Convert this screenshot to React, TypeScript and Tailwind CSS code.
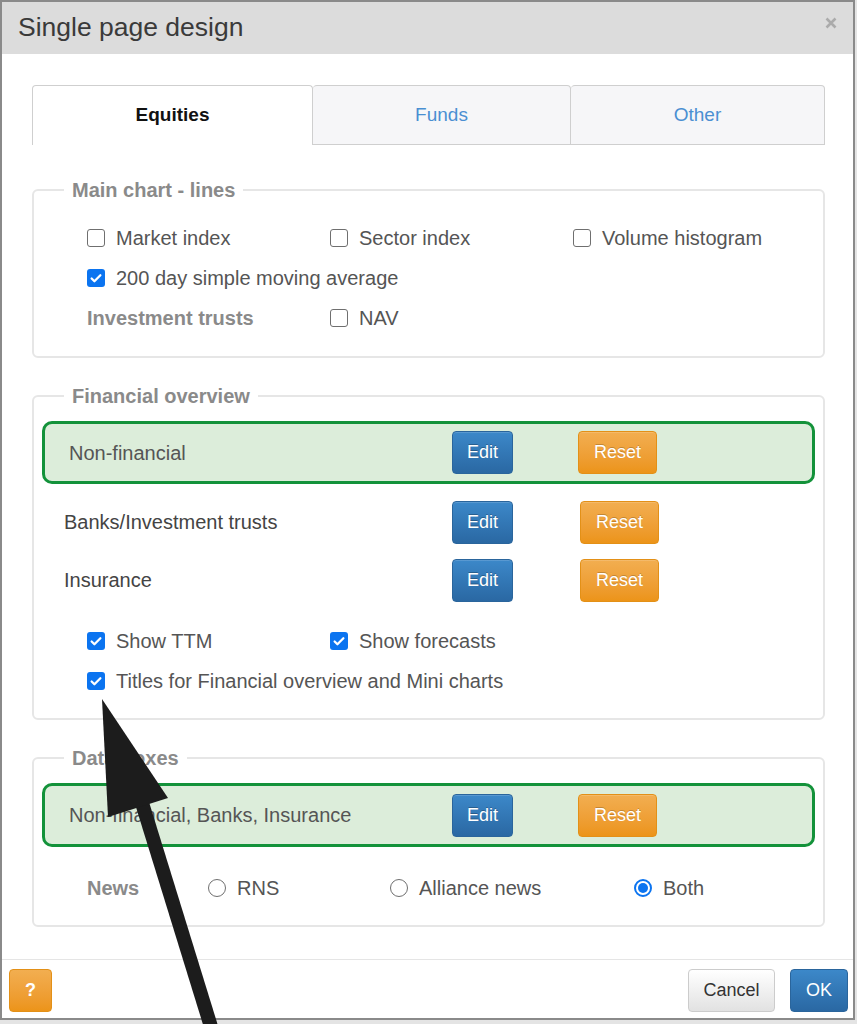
import React from 'react';

const Check = ({ checked, label }: { checked?: boolean; label: string }) => {
    return (
        <div className="flex items-center gap-[11px]">
            {checked ? (
                <span className="w-[18px] h-[18px] rounded-[3px] bg-[#0b74f0] flex items-center justify-center">
                    <svg viewBox="0 0 16 16" className="w-[14px] h-[14px]" fill="none">
                        <path d="M3 8.5l3.2 3.2L13 4.8" stroke="white" strokeWidth="2.6" strokeLinecap="round" strokeLinejoin="round" />
                    </svg>
                </span>
            ) : (
                <span className="w-[18px] h-[18px] rounded-[3px] border-[1.5px] border-[#6f6f6f] bg-white" />
            )}
            <span className="text-[20px] text-[#555]">{label}</span>
        </div>
    );
};

const Radio = ({ checked, label }: { checked?: boolean; label: string }) => {
    return (
        <div className="flex items-center gap-[11px]">
            {checked ? (
                <span className="w-[18px] h-[18px] rounded-full border-2 border-[#0b74f0] flex items-center justify-center bg-white">
                    <span className="w-[10px] h-[10px] rounded-full bg-[#0b74f0]" />
                </span>
            ) : (
                <span className="w-[18px] h-[18px] rounded-full border-[1.5px] border-[#6f6f6f] bg-white" />
            )}
            <span className="text-[20px] text-[#555]">{label}</span>
        </div>
    );
};

const EditBtn = () => (
    <button
        type="button"
        className="w-[61px] h-[43px] rounded-[4px] border border-[#2a659c] bg-linear-to-b from-[#3c88c9] to-[#2a68a3] text-white text-[18px] [text-shadow:0_-1px_0_rgba(0,0,0,0.25)] shadow-[inset_0_1px_0_rgba(255,255,255,0.15)]"
    >
        Edit
    </button>
);

const ResetBtn = () => (
    <button
        type="button"
        className="w-[79px] h-[43px] rounded-[4px] border border-[#e39017] bg-linear-to-b from-[#f2ae50] to-[#ec9418] text-white text-[18px] [text-shadow:0_-1px_0_rgba(0,0,0,0.2)] shadow-[inset_0_1px_0_rgba(255,255,255,0.15)]"
    >
        Reset
    </button>
);

const Section = ({ title, className, children }: { title: string; className?: string; children: React.ReactNode }) => (
    <fieldset className={`border-2 border-[#e6e6e6] rounded-[6px] p-0 ${className ?? ''}`}>
        <legend className="ml-[30px] px-[8px] text-[20px] leading-[24px] font-bold text-[#8a8a8a]">{title}</legend>
        {children}
    </fieldset>
);

const App = () => {
    return (
        <div className="relative w-[857px] h-[1024px] overflow-hidden bg-[#e4e4e4] font-['Liberation_Sans',Arial,sans-serif]">
            <div className="w-[855px] h-[1020px] border-2 border-[#8a8a8a] bg-white flex flex-col">
                {/* header */}
                <div className="h-[52px] bg-[#dcdcdc] flex items-center justify-between pl-[16px] pr-[16px] shrink-0">
                    <h1 className="text-[26.5px] text-[#3a3a3a]">Single page design</h1>
                    <svg viewBox="0 0 12 12" className="w-[12px] h-[12px] mt-[-10px]">
                        <path d="M1.5 1.5l9 9M10.5 1.5l-9 9" stroke="#ababab" strokeWidth="2.6" />
                    </svg>
                </div>

                <div className="pl-[30px] pr-[28px] pt-[31px]">
                    {/* tabs */}
                    <div className="flex h-[60px]">
                        <div className="w-[281px] border border-b-0 border-[#cfcfcf] rounded-t-[4px] bg-white flex items-center justify-center text-[19px] font-bold text-[#111]">
                            Equities
                        </div>
                        <div className="w-[258px] border border-l-0 border-[#cfcfcf] rounded-t-[4px] bg-[#f6f6f8] flex items-center justify-center text-[19px] text-[#4a8fd2]">
                            Funds
                        </div>
                        <div className="w-[254px] border border-l-0 border-[#cfcfcf] rounded-t-[4px] bg-[#f6f6f8] flex items-center justify-center text-[19px] text-[#4a8fd2]">
                            Other
                        </div>
                    </div>

                    {/* main chart */}
                    <Section title="Main chart - lines" className="mt-[33px]">
                        <div className="pt-[16px] pb-[18px] pl-[53px]">
                            <div className="grid grid-cols-[243px_243px_1fr] h-[40px] items-center">
                                <Check label="Market index" />
                                <Check label="Sector index" />
                                <Check label="Volume histogram" />
                            </div>
                            <div className="flex h-[40px] items-center">
                                <Check checked label="200 day simple moving average" />
                            </div>
                            <div className="grid grid-cols-[243px_1fr] h-[40px] items-center">
                                <span className="text-[20px] font-bold text-[#8a8a8a]">Investment trusts</span>
                                <Check label="NAV" />
                            </div>
                        </div>
                    </Section>

                    {/* financial overview */}
                    <Section title="Financial overview" className="mt-[26px]">
                        <div className="pt-[13px] pb-[17px] pl-[8px] pr-[8px]">
                            <div className="h-[63px] border-[3px] border-[#13923a] rounded-[10px] bg-[#dcedda] flex items-center pl-[24px]">
                                <span className="w-[383px] text-[20px] text-[#555]">Non-financial</span>
                                <EditBtn />
                                <span className="w-[65px]" />
                                <ResetBtn />
                            </div>
                            <div className="mt-[9px] h-[58px] flex items-center pl-[22px]">
                                <span className="w-[388px] text-[20px] text-[#444]">Banks/Investment trusts</span>
                                <EditBtn />
                                <span className="w-[67px]" />
                                <ResetBtn />
                            </div>
                            <div className="h-[58px] flex items-center pl-[22px]">
                                <span className="w-[388px] text-[20px] text-[#444]">Insurance</span>
                                <EditBtn />
                                <span className="w-[67px]" />
                                <ResetBtn />
                            </div>
                            <div className="mt-[12px] pl-[45px]">
                                <div className="grid grid-cols-[243px_1fr] h-[40px] items-center">
                                    <Check checked label="Show TTM" />
                                    <Check checked label="Show forecasts" />
                                </div>
                                <div className="flex h-[40px] items-center">
                                    <Check checked label="Titles for Financial overview and Mini charts" />
                                </div>
                            </div>
                        </div>
                    </Section>

                    {/* data boxes */}
                    <Section title="Data boxes" className="mt-[26px]">
                        <div className="pt-[13px] pb-[17px] pl-[8px] pr-[8px]">
                            <div className="h-[64px] border-[3px] border-[#13923a] rounded-[10px] bg-[#dcedda] flex items-center pl-[24px]">
                                <span className="w-[383px] text-[20px] text-[#555]">Non-financial, Banks, Insurance</span>
                                <EditBtn />
                                <span className="w-[65px]" />
                                <ResetBtn />
                            </div>
                            <div className="mt-[21px] h-[40px] flex items-center pl-[45px]">
                                <span className="w-[121px] text-[20px] font-bold text-[#8a8a8a]">News</span>
                                <div className="w-[182px]">
                                    <Radio label="RNS" />
                                </div>
                                <div className="w-[244px]">
                                    <Radio label="Alliance news" />
                                </div>
                                <Radio checked label="Both" />
                            </div>
                        </div>
                    </Section>
                </div>

                {/* footer */}
                <div className="mt-auto h-[59px] border-t border-[#e5e5e5] flex items-start justify-between pt-[9px] pl-[7px] pr-[5px]">
                    <button
                        type="button"
                        className="w-[43px] h-[43px] rounded-[4px] border border-[#e39017] bg-linear-to-b from-[#f2ae50] to-[#ec9418] text-white text-[18px] font-bold"
                    >
                        ?
                    </button>
                    <div className="flex gap-[15px]">
                        <button
                            type="button"
                            className="w-[87px] h-[43px] rounded-[4px] border border-[#cccccc] bg-linear-to-b from-[#ffffff] to-[#e2e2e2] text-[#333] text-[18px]"
                        >
                            Cancel
                        </button>
                        <button
                            type="button"
                            className="w-[58px] h-[43px] rounded-[4px] border border-[#2a659c] bg-linear-to-b from-[#3c88c9] to-[#2a68a3] text-white text-[18px]"
                        >
                            OK
                        </button>
                    </div>
                </div>
            </div>

            {/* annotation arrow */}
            <svg className="absolute inset-0 pointer-events-none" width="857" height="1024" viewBox="0 0 857 1024">
                <line x1="138" y1="790" x2="212" y2="1030" stroke="#1c1c1c" strokeWidth="14" />
                <polygon points="102,699 108,817 168,798" fill="#1c1c1c" />
            </svg>
        </div>
    );
};

export default App;
